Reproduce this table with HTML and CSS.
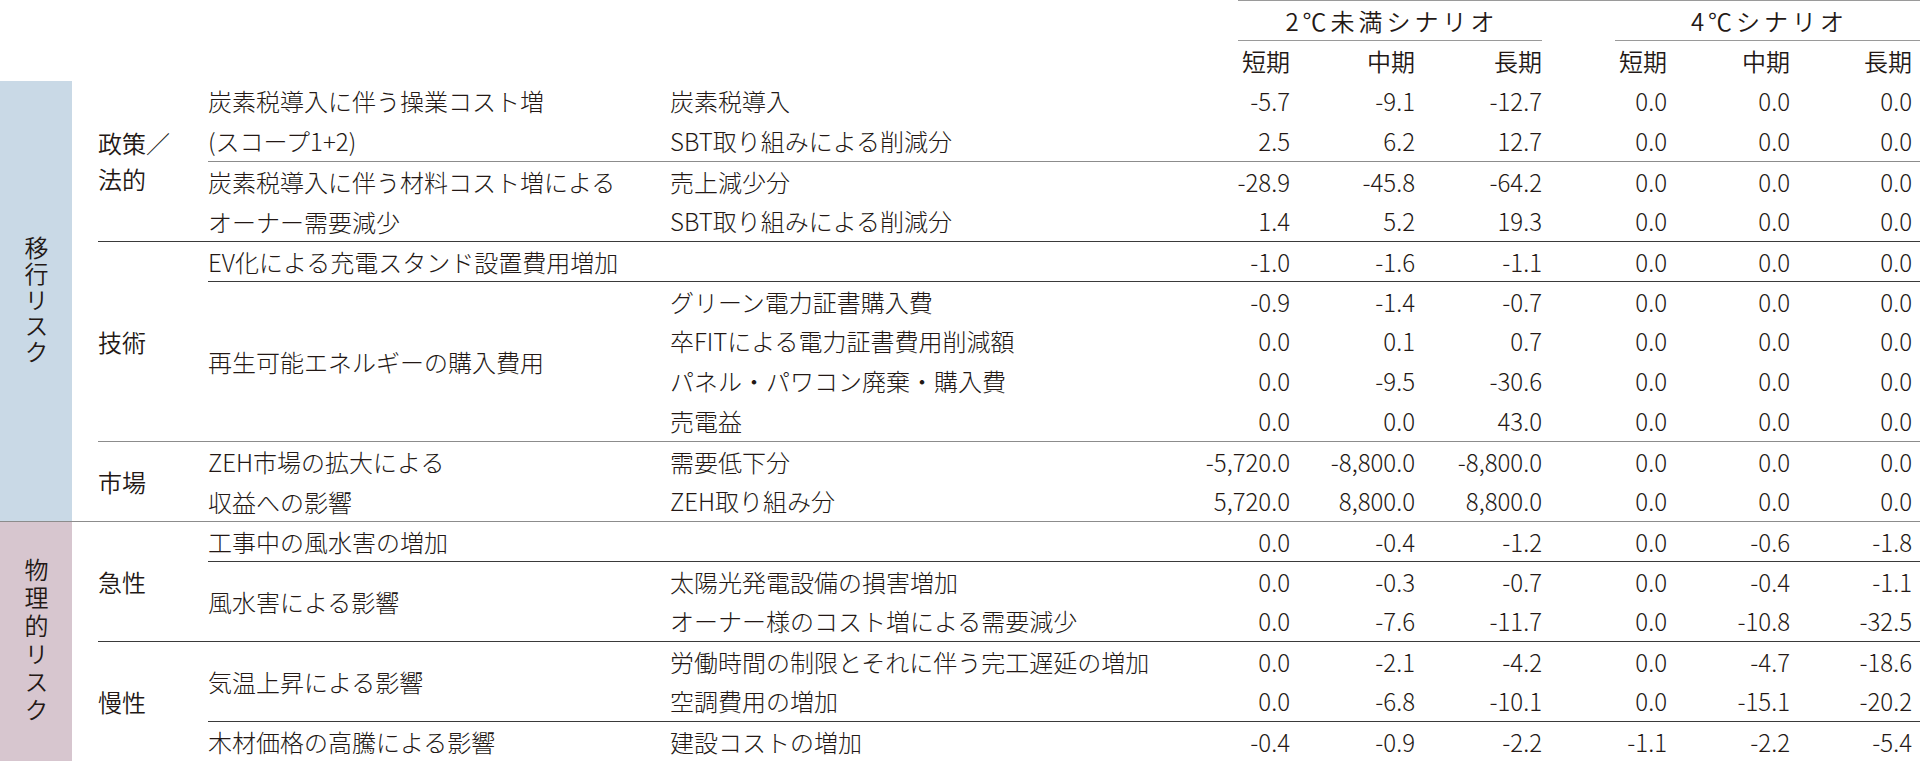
FILE: index.html
```html
<!DOCTYPE html>
<html lang="ja">
<head>
<meta charset="utf-8">
<title>シナリオ分析</title>
<link rel="stylesheet" href="styles.css">
</head>
<body>
<div class="sheet">
  <div class="blank"></div>
  <div class="scenarios">
    <div class="scn scn-2">2℃未満シナリオ</div>
    <div class="scn scn-4">4℃シナリオ</div>
  </div>

  <div class="blank"></div>
  <div class="ph">短期</div><div class="ph">中期</div><div class="ph">長期</div>
  <div class="ph">短期</div><div class="ph">中期</div><div class="ph e">長期</div>

  <!-- row 1 -->
  <div class="band band-t rs11"><div class="band-fill"><span class="band-text">移行リスク</span></div></div>
  <div class="cat rs4"><span>政策／<br>法的</span></div>
  <div class="item rs2"><span>炭素税導入に伴う操業コスト増<br>(スコープ1+2)</span></div>
  <div class="sub">炭素税導入</div>
  <div class="n">-5.7</div><div class="n">-9.1</div><div class="n">-12.7</div><div class="n">0.0</div><div class="n">0.0</div><div class="n e">0.0</div>
  <!-- row 2 -->
  <div class="sub">SBT取り組みによる削減分</div>
  <div class="n">2.5</div><div class="n">6.2</div><div class="n">12.7</div><div class="n">0.0</div><div class="n">0.0</div><div class="n e">0.0</div>
  <!-- row 3 -->
  <div class="item rs2 lg"><span>炭素税導入に伴う材料コスト増による<br>オーナー需要減少</span></div>
  <div class="sub lg">売上減少分</div>
  <div class="n lg">-28.9</div><div class="n lg">-45.8</div><div class="n lg">-64.2</div><div class="n lg">0.0</div><div class="n lg">0.0</div><div class="n e lg">0.0</div>
  <!-- row 4 -->
  <div class="sub">SBT取り組みによる削減分</div>
  <div class="n">1.4</div><div class="n">5.2</div><div class="n">19.3</div><div class="n">0.0</div><div class="n">0.0</div><div class="n e">0.0</div>
  <!-- row 5 -->
  <div class="cat rs5 ld"><span>技術</span></div>
  <div class="item ld"><span>EV化による充電スタンド設置費用増加</span></div>
  <div class="sub ld"></div>
  <div class="n ld">-1.0</div><div class="n ld">-1.6</div><div class="n ld">-1.1</div><div class="n ld">0.0</div><div class="n ld">0.0</div><div class="n e ld">0.0</div>
  <!-- row 6 -->
  <div class="item rs4 ld"><span>再生可能エネルギーの購入費用</span></div>
  <div class="sub ld">グリーン電力証書購入費</div>
  <div class="n ld">-0.9</div><div class="n ld">-1.4</div><div class="n ld">-0.7</div><div class="n ld">0.0</div><div class="n ld">0.0</div><div class="n e ld">0.0</div>
  <!-- row 7 -->
  <div class="sub">卒FITによる電力証書費用削減額</div>
  <div class="n">0.0</div><div class="n">0.1</div><div class="n">0.7</div><div class="n">0.0</div><div class="n">0.0</div><div class="n e">0.0</div>
  <!-- row 8 -->
  <div class="sub">パネル・パワコン廃棄・購入費</div>
  <div class="n">0.0</div><div class="n">-9.5</div><div class="n">-30.6</div><div class="n">0.0</div><div class="n">0.0</div><div class="n e">0.0</div>
  <!-- row 9 -->
  <div class="sub">売電益</div>
  <div class="n">0.0</div><div class="n">0.0</div><div class="n">43.0</div><div class="n">0.0</div><div class="n">0.0</div><div class="n e">0.0</div>
  <!-- row 10 -->
  <div class="cat rs2 lg"><span>市場</span></div>
  <div class="item rs2 lg"><span>ZEH市場の拡大による<br>収益への影響</span></div>
  <div class="sub lg">需要低下分</div>
  <div class="n lg">-5,720.0</div><div class="n lg">-8,800.0</div><div class="n lg">-8,800.0</div><div class="n lg">0.0</div><div class="n lg">0.0</div><div class="n e lg">0.0</div>
  <!-- row 11 -->
  <div class="sub">ZEH取り組み分</div>
  <div class="n">5,720.0</div><div class="n">8,800.0</div><div class="n">8,800.0</div><div class="n">0.0</div><div class="n">0.0</div><div class="n e">0.0</div>
  <!-- row 12 -->
  <div class="band band-p rs6 lg"><div class="band-fill"><span class="band-text">物理的リスク</span></div></div>
  <div class="cat rs3 lg"><span>急性</span></div>
  <div class="item lg"><span>工事中の風水害の増加</span></div>
  <div class="sub lg"></div>
  <div class="n lg">0.0</div><div class="n lg">-0.4</div><div class="n lg">-1.2</div><div class="n lg">0.0</div><div class="n lg">-0.6</div><div class="n e lg">-1.8</div>
  <!-- row 13 -->
  <div class="item rs2 ld"><span>風水害による影響</span></div>
  <div class="sub ld">太陽光発電設備の損害増加</div>
  <div class="n ld">0.0</div><div class="n ld">-0.3</div><div class="n ld">-0.7</div><div class="n ld">0.0</div><div class="n ld">-0.4</div><div class="n e ld">-1.1</div>
  <!-- row 14 -->
  <div class="sub">オーナー様のコスト増による需要減少</div>
  <div class="n">0.0</div><div class="n">-7.6</div><div class="n">-11.7</div><div class="n">0.0</div><div class="n">-10.8</div><div class="n e">-32.5</div>
  <!-- row 15 -->
  <div class="cat rs3 ld"><span>慢性</span></div>
  <div class="item rs2 ld"><span>気温上昇による影響</span></div>
  <div class="sub ld">労働時間の制限とそれに伴う完工遅延の増加</div>
  <div class="n ld">0.0</div><div class="n ld">-2.1</div><div class="n ld">-4.2</div><div class="n ld">0.0</div><div class="n ld">-4.7</div><div class="n e ld">-18.6</div>
  <!-- row 16 -->
  <div class="sub">空調費用の増加</div>
  <div class="n">0.0</div><div class="n">-6.8</div><div class="n">-10.1</div><div class="n">0.0</div><div class="n">-15.1</div><div class="n e">-20.2</div>
  <!-- row 17 -->
  <div class="item ld"><span>木材価格の高騰による影響</span></div>
  <div class="sub ld">建設コストの増加</div>
  <div class="n ld">-0.4</div><div class="n ld">-0.9</div><div class="n ld">-2.2</div><div class="n ld">-1.1</div><div class="n ld">-2.2</div><div class="n e ld">-5.4</div>
</div>
</body>
</html>
```

FILE: styles.css
```css
html, body {
  margin: 0;
  padding: 0;
  background: #ffffff;
}

body {
  color: #231815;
  font-family: "Noto Sans CJK JP", "Noto Sans", sans-serif;
  font-size: 24px;
  font-weight: 300;
}

.sheet {
  display: grid;
  grid-template-columns: 98px 110px 462px 496px 124px 125px 127px 125px 123px 130px;
  grid-template-rows: 41px 40px repeat(17, 40px);
  width: 1920px;
}

.sheet > div {
  box-sizing: border-box;
  white-space: nowrap;
}

.blank {
  grid-column: span 4;
}

.scenarios {
  grid-column: span 6;
  margin-left: 72px;
  display: flex;
  border-top: 1px solid #9a9a9a;
}

.scn {
  display: flex;
  align-items: center;
  justify-content: center;
  border-bottom: 1px solid #9a9a9a;
  font-weight: 350;
  letter-spacing: 4px;
  text-indent: 4px;
}

.scn-2 {
  width: 304px;
}

.scn-4 {
  flex: 1;
  margin-left: 73px;
}

.ph {
  text-align: right;
  line-height: 40px;
  font-weight: 350;
}

.e {
  padding-right: 8px;
}

.rs2 { grid-row: span 2; }
.rs3 { grid-row: span 3; }
.rs4 { grid-row: span 4; }
.rs5 { grid-row: span 5; }
.rs6 { grid-row: span 6; }
.rs11 { grid-row: span 11; }

.band {
  display: flex;
}

.band-fill {
  width: 72px;
  display: flex;
  align-items: center;
  justify-content: center;
}

.band-t .band-fill {
  background: #c9d9e6;
}

.band-p .band-fill {
  background: #d7c6cf;
}

.band-text {
  writing-mode: vertical-rl;
  font-weight: 350;
  letter-spacing: 2px;
  line-height: 1;
}

.band-p .band-text {
  letter-spacing: 4px;
}

.cat {
  display: flex;
  align-items: center;
  line-height: 36px;
  font-weight: 350;
}

.item {
  display: flex;
  align-items: center;
  line-height: 40px;
}

.sub {
  line-height: 40px;
}

.n {
  text-align: right;
  line-height: 40px;
}

.lg {
  border-top: 1px solid #8c8c8c;
}

.ld {
  border-top: 1px solid #3a3a3a;
}
```
